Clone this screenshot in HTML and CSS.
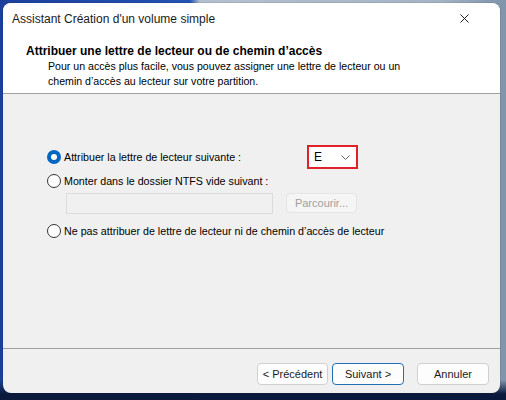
FILE: index.html
```html
<!DOCTYPE html>
<html lang="fr">
<head>
<meta charset="utf-8">
<link rel="stylesheet" href="styles.css">
</head>
<body>
<div class="desktop">
  <div class="window">
    <div class="titlebar">
      <span class="title">Assistant Création d'un volume simple</span>
      <svg class="close" width="10" height="10" viewBox="0 0 10 10"><path d="M0.5 0.5 L9.5 9.5 M9.5 0.5 L0.5 9.5" stroke="#1a1a1a" stroke-width="1.1" fill="none"/></svg>
    </div>
    <div class="header">
      <div class="heading">Attribuer une lettre de lecteur ou de chemin d’accès</div>
      <div class="sub">Pour un accès plus facile, vous pouvez assigner une lettre de lecteur ou un<br>chemin d’accès au lecteur sur votre partition.</div>
    </div>
    <div class="body">
      <div class="row row1">
        <span class="radio checked"></span>
        <span class="label label1">Attribuer la lettre de lecteur suivante :</span>
        <div class="select">
          <span>E</span>
          <svg width="9" height="5" viewBox="0 0 9 5"><path d="M0.5 0.5 L4.5 4.5 L8.5 0.5" stroke="#606060" stroke-width="1" fill="none"/></svg>
        </div>
      </div>
      <div class="row row2">
        <span class="radio"></span>
        <span class="label">Monter dans le dossier NTFS vide suivant :</span>
      </div>
      <div class="row pathrow">
        <div class="field"></div>
        <div class="btn disabled">Parcourir...</div>
      </div>
      <div class="row row3">
        <span class="radio"></span>
        <span class="label">Ne pas attribuer de lettre de lecteur ni de chemin d’accès de lecteur</span>
      </div>
    </div>
    <div class="footer">
      <div class="btn">&lt; Précédent</div>
      <div class="btn primary">Suivant &gt;</div>
      <div class="btn cancel">Annuler</div>
    </div>
  </div>
</div>
</body>
</html>
```
FILE: styles.css
```css
html, body { margin: 0; padding: 0; }
body {
  width: 506px; height: 400px; overflow: hidden;
  font-family: "Liberation Sans", Arial, sans-serif;
  background:
    linear-gradient(to bottom, rgba(0,0,0,0) 0px, rgba(0,0,0,0) 380px, #0b1a3c 394px),
    linear-gradient(to right, #1d3f9c 0px, #2452b4 190px, #b3c1cf 200px, #a4b4c4 440px, #8195ab 500px);
}
.desktop { padding: 3px 6px 7px 3px; }
.window {
  width: 497px; height: 390px;
  background: #f0f0f0;
  border-radius: 8px;
  overflow: hidden;
  display: flex; flex-direction: column;
  box-shadow: 0 0 0 1px rgba(0,0,0,0.08);
}
.titlebar {
  height: 31px; background: #fff;
  display: flex; align-items: center; justify-content: space-between;
  padding: 0 31px 0 9px;
  font-size: 12px; color: #1a1a1a;
}
.close { width: 9px; height: 9px; }
.header {
  background: #fff;
  border-bottom: 1px solid #a0a0a0;
  padding: 10px 0 0 23px;
  box-sizing: border-box; height: 60px;
}
.heading { font-weight: bold; font-size: 12px; color: #000; line-height: 14px; }
.sub { font-size: 10.6px; color: #000; padding-left: 22px; line-height: 15px; margin-top: 1px; }
.body { flex: 1; padding: 51px 0 0 44px; font-size: 10.7px; color: #000; }
.row { display: flex; align-items: center; }
.radio {
  width: 14px; height: 14px; border-radius: 50%;
  border: 1px solid #333; box-sizing: border-box; background: #fff;
  margin-right: 3px; flex: none;
}
.radio.checked { border: 4px solid #0067c0; background: #fff; }
.row1 { height: 24px; }
.label1 { width: 243px; }
.select {
  width: 51px; height: 24px; box-sizing: border-box;
  border: 2px solid #e0202a; background: #fff;
  display: flex; align-items: center; justify-content: space-between;
  padding: 0 6px 0 5px; font-size: 12px;
}
.row2 { height: 18px; margin-top: 3px; }
.pathrow { margin-top: 2px; margin-left: 19px; height: 22px; }
.field { width: 207px; height: 21px; box-sizing: border-box; border: 1px solid #dcdcdc; background: #f0f0f0; }
.btn {
  height: 22px; box-sizing: border-box; border: 1px solid #d0d0d0; border-radius: 4px;
  background: #fdfdfd; font-size: 11px; color: #1a1a1a;
  display: flex; align-items: center; justify-content: center; width: 72px;
}
.btn.disabled { margin-left: 13px; width: 71px; height: 20px; color: #a0a0a0; background: #f5f5f5; border-color: #e5e5e5; }
.row3 { margin-top: 8px; height: 18px; }
.footer {
  height: 45px; border-top: 1px solid #a0a0a0; box-sizing: border-box;
  display: flex; align-items: flex-start; padding: 14px 0 0 254px; gap: 4px;
}
.btn.primary { border: 1px solid #1f6fb5; box-shadow: inset 0 0 0 1px #fff; }
.btn.cancel { margin-left: 9px; }
.btn:first-child { width: 71px; }
```
